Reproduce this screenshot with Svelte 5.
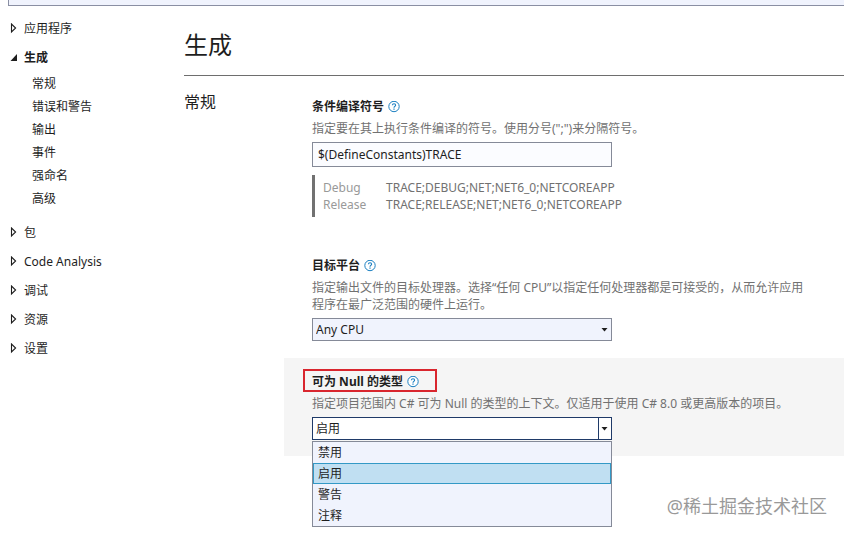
<script>
  let filter = $state('');
  let symbols = $state('$(DefineConstants)TRACE');
  let platform = $state('Any CPU');
  let nullable = $state('启用');

  const before = { name: '应用程序', id: 'application' };
  const buildPages = ['常规', '错误和警告', '输出', '事件', '强命名', '高级'];
  const after = ['包', 'Code Analysis', '调试', '资源', '设置'];
  const nullableOptions = ['禁用', '启用', '警告', '注释'];
  const evaluated = [
    ['Debug', 'TRACE;DEBUG;NET;NET6_0;NETCOREAPP'],
    ['Release', 'TRACE;RELEASE;NET;NET6_0;NETCOREAPP']
  ];
</script>

{#snippet closed()}
  <svg class="twisty" width="8" height="12" viewBox="0 0 8 12" aria-hidden="true">
    <path d="M1.5 1v8L5.6 5z" fill="none" stroke="#1e1e1e" stroke-width="1.1" />
  </svg>
{/snippet}

{#snippet help(topic)}
  <a class="help" href="#help" aria-label={topic}>
    <svg width="12" height="12" viewBox="0 0 12 12" aria-hidden="true">
      <circle cx="6" cy="5.5" r="5.2" fill="#fff" stroke="#1a7fc1" stroke-width="1" />
      <path d="M4.4 4.2C4.5 2.3 7.6 2.3 7.6 4.2 7.6 5.3 6 5.4 6 6.7" fill="none" stroke="#1a7fc1" stroke-width="1.1" />
      <path d="M5.4 7.5h1.2v1.2H5.4z" fill="#1a7fc1" />
    </svg>
  </a>
{/snippet}

{#snippet caret()}
  <svg class="caret" width="7" height="4" viewBox="0 0 7 4" aria-hidden="true">
    <path d="M0.5 0h6L3.5 3.4z" fill="#1e1e1e" />
  </svg>
{/snippet}

<div class="page">
  <header>
    <input class="search" type="search" aria-label="搜索" bind:value={filter} />
  </header>

  <div class="body">
    <nav>
      <a class="node" href="#{before.id}">{@render closed()}{before.name}</a>
      <a class="node current" href="#build">
        <svg class="twisty" width="8" height="12" viewBox="0 0 8 12" aria-hidden="true">
          <path d="M7 2v7H0.5z" fill="#1e1e1e" />
        </svg>生成</a>
      <div class="pages">
        {#each buildPages as name}
          <a href="#{name}">{name}</a>
        {/each}
      </div>
      {#each after as name}
        <a class="node" href="#{name}">{@render closed()}{name}</a>
      {/each}
    </nav>

    <main>
      <h1>生成</h1>
      <section>
        <h2>常规</h2>
        <div class="fields">
          <div class="field">
            <div class="label"><label for="symbols">条件编译符号</label>{@render help('条件编译符号')}</div>
            <p>指定要在其上执行条件编译的符号。使用分号(";")来分隔符号。</p>
            <input id="symbols" class="text" type="text" bind:value={symbols} />
            <table>
              <tbody>
                {#each evaluated as [name, value]}
                  <tr><th scope="row">{name}</th><td>{value}</td></tr>
                {/each}
              </tbody>
            </table>
          </div>

          <div class="field second">
            <div class="label"><label for="platform">目标平台</label>{@render help('目标平台')}</div>
            <p>指定输出文件的目标处理器。选择“任何 CPU”以指定任何处理器都是可接受的，从而允许应用程序在最广泛范围的硬件上运行。</p>
            <div class="combo">
              <select id="platform" bind:value={platform}>
                <option>Any CPU</option>
                <option>x86</option>
                <option>x64</option>
              </select>
              {@render caret()}
            </div>
          </div>

          <div class="field active">
            <div class="label marked"><label for="nullable">可为 Null 的类型</label>{@render help('可为 Null 的类型')}</div>
            <p>指定项目范围内 C# 可为 Null 的类型的上下文。仅适用于使用 C# 8.0 或更高版本的项目。</p>
            <div class="combo open">
              <select id="nullable" bind:value={nullable}>
                {#each nullableOptions as option}
                  <option>{option}</option>
                {/each}
              </select>
              {@render caret()}
              <div class="list" role="listbox" aria-label="可为 Null 的类型">
                {#each nullableOptions as option}
                  <button
                    type="button"
                    role="option"
                    aria-selected={option === nullable}
                    class:selected={option === nullable}
                    onclick={() => (nullable = option)}>{option}</button>
                {/each}
              </div>
            </div>
          </div>
        </div>
      </section>
    </main>
  </div>

  <div class="watermark">@稀土掘金技术社区</div>
</div>

<style>
  .page {
    position: relative;
    box-sizing: border-box;
    min-height: 100vh;
    overflow: hidden;
    background: #fff;
    color: #1e1e1e;
    font: 12px/17px 'Noto Sans', 'Noto Sans CJK SC', sans-serif;
  }
  header {
    display: flex;
    padding-left: 8px;
  }
  .search {
    flex: 1;
    box-sizing: border-box;
    height: 6px;
    padding: 0;
    border: solid #8a8fa3;
    border-width: 0 0 1px 1px;
    border-radius: 0;
    outline: none;
    appearance: none;
    background: #f0f3fd;
    font: inherit;
  }
  .body {
    display: flex;
  }
  nav {
    flex: none;
    box-sizing: border-box;
    width: 184px;
    padding: 8px 10px;
  }
  nav a {
    display: flex;
    align-items: center;
    color: inherit;
    text-decoration: none;
  }
  .node {
    height: 29px;
    gap: 6px;
  }
  .current {
    font-weight: 700;
  }
  .pages {
    padding: 0 0 8px 22px;
  }
  .pages a {
    height: 23px;
  }
  main {
    flex: 1;
    min-width: 0;
  }
  h1 {
    margin: 0;
    padding: 21px 0 13px;
    border-bottom: 1px solid #6e6e6e;
    font-size: 24px;
    line-height: 35px;
    font-weight: 400;
  }
  section {
    display: flex;
    padding-top: 8px;
  }
  h2 {
    flex: none;
    width: 100px;
    margin: 0;
    padding-top: 6px;
    font-size: 16px;
    line-height: 24px;
    font-weight: 400;
  }
  .fields {
    flex: 1;
    min-width: 0;
  }
  .field {
    padding: 14px 28px 16px;
  }
  .second {
    margin-top: 10px;
    padding-bottom: 17px;
  }
  .active {
    padding-top: 15px;
    background: #f5f5f5;
  }
  .label {
    position: relative;
    display: flex;
    align-items: center;
    gap: 4px;
    width: fit-content;
    font-weight: 700;
  }
  .marked::after {
    content: '';
    position: absolute;
    inset: -4px -18px -2px -9px;
    border: 2px solid #d9262e;
    pointer-events: none;
  }
  .help {
    display: flex;
  }
  p {
    max-width: 500px;
    margin: 5px 0;
    color: #717171;
  }
  .text,
  select {
    display: block;
    box-sizing: border-box;
    width: 100%;
    max-width: 300px;
    margin: 0;
    border: 1px solid #858a98;
    border-radius: 0;
    outline: none;
    appearance: none;
    color: #1e1e1e;
    font: inherit;
  }
  .text {
    height: 25px;
    padding: 0 5px;
    background: #fbfcff;
  }
  table {
    display: block;
    margin-top: 8px;
    padding: 4px 0 4px 8px;
    border-left: 3px solid #717171;
    border-spacing: 0;
    color: #717171;
  }
  th,
  td {
    padding: 0;
    text-align: left;
    font-weight: 400;
  }
  th {
    width: 63px;
    color: #999;
  }
  .combo {
    position: relative;
    max-width: 300px;
  }
  select {
    height: 23px;
    padding: 0 16px 0 3px;
    background: #f0f3fd;
  }
  .caret {
    position: absolute;
    top: 10px;
    right: 4px;
    pointer-events: none;
  }
  .open select {
    border-color: #1f3a68;
    background: linear-gradient(#1f3a68, #1f3a68) right 12px top / 1px 100% no-repeat #fff;
  }
  .list {
    position: absolute;
    top: 24px;
    left: 0;
    right: 0;
    border: 1px solid #858a98;
    background: #f0f3fd;
  }
  .list button {
    display: block;
    box-sizing: border-box;
    width: 100%;
    height: 21px;
    padding: 0 4px;
    border: 1px solid transparent;
    background: none;
    color: #1e1e1e;
    font: inherit;
    text-align: left;
  }
  .list .selected {
    border-color: #3399c6;
    background: #c0dff2;
  }
  .watermark {
    position: absolute;
    right: 17px;
    bottom: 16px;
    color: #999;
    font-size: 18px;
    line-height: 24px;
  }
</style>
